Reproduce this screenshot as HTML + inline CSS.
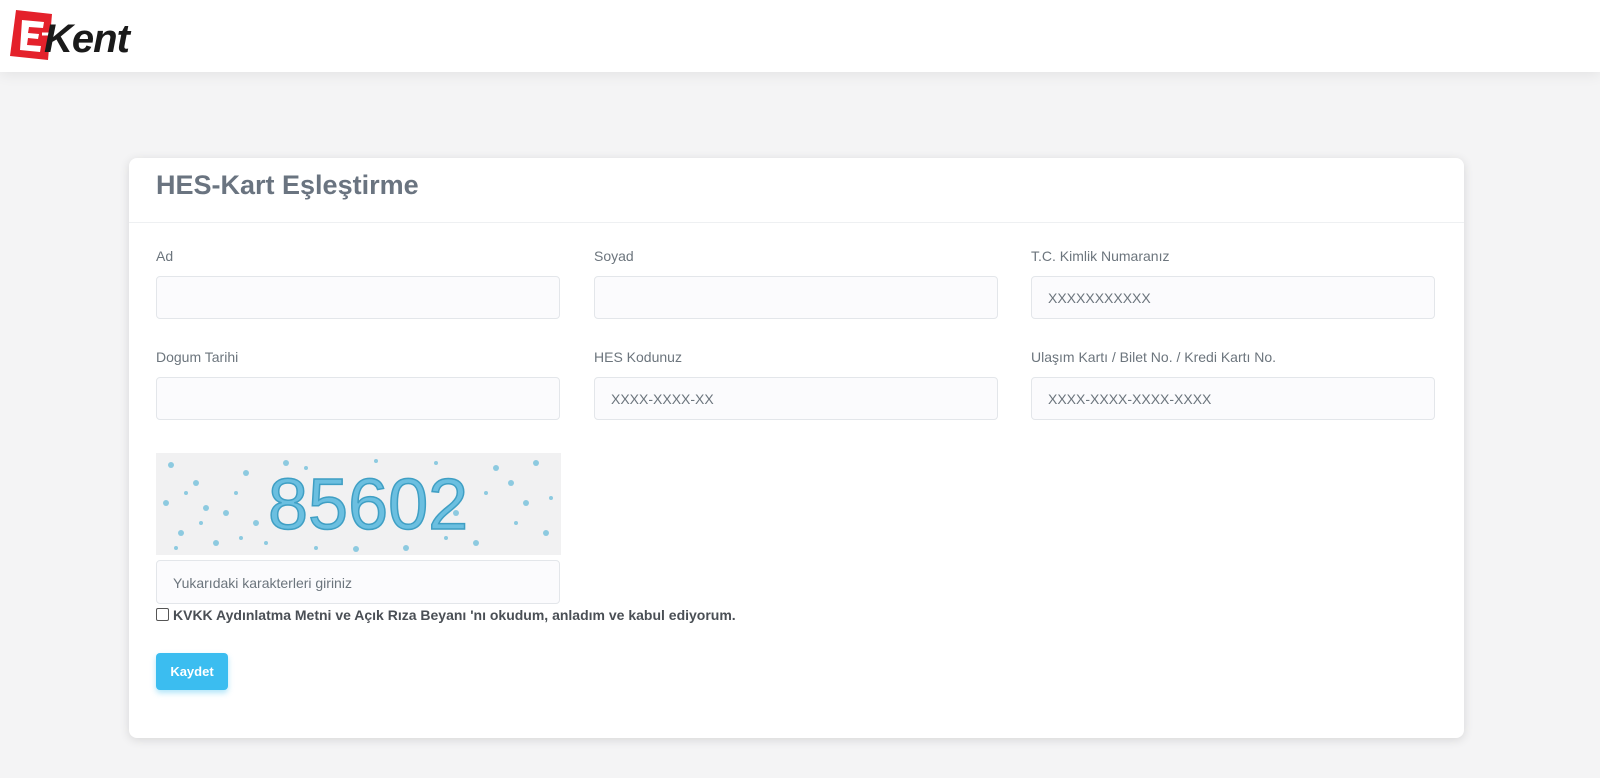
<!DOCTYPE html><html><head><meta charset="utf-8"><style>
body{margin:0;width:1600px;height:778px;background:#f4f4f5;font-family:"Liberation Sans",sans-serif;overflow:hidden;position:relative}
.hdr{position:absolute;left:0;top:0;width:1600px;height:72px;background:#fff;box-shadow:0 2px 14px rgba(0,0,0,.08)}
.card{position:absolute;left:129px;top:158px;width:1335px;height:580px;background:#fff;border-radius:8px;box-shadow:0 2px 10px rgba(0,0,0,.12)}
.t{position:absolute;left:156px;top:170px;font-size:27px;font-weight:bold;color:#6a7480}
.div{position:absolute;left:129px;top:222px;width:1335px;height:1px;background:#eef0f2}
.l{position:absolute;font-size:14px;color:#6c757d}
.i{position:absolute;width:404px;height:43px;border:1px solid #e3e6ea;border-radius:4px;background:#fbfbfd;box-sizing:border-box;font-size:14px;color:#6c757d;padding:13px 16px;}
</style></head><body>
<div class="hdr">
<svg width="150" height="64" style="position:absolute;left:8px;top:4px">
<polygon points="8,6 44,10 40,56 2,52" fill="#e4212b"/>
<path d="M14,16 L36,18 L35,24 L21,23 L20,29 L31,30 L30,35 L20,34 L19,41 L33,42 L32,48 L12,46 Z" fill="#fff"/>
<path d="M34,30 L42,30" stroke="#fff" stroke-width="3"/>
<text x="36" y="48" font-family="Liberation Sans" font-weight="bold" font-style="italic" font-size="40" fill="#1a1a1a" letter-spacing="-1">Kent</text>
</svg></div>
<div class="card"></div>
<div class="t">HES-Kart Eşleştirme</div>
<div class="div"></div>
<div class="l" style="left:156px;top:248px">Ad</div>
<div class="l" style="left:594px;top:248px">Soyad</div>
<div class="l" style="left:1031px;top:248px">T.C. Kimlik Numaranız</div>
<div class="i" style="left:156px;top:276px"></div>
<div class="i" style="left:594px;top:276px"></div>
<div class="i" style="left:1031px;top:276px">XXXXXXXXXXX</div>
<div class="l" style="left:156px;top:349px">Dogum Tarihi</div>
<div class="l" style="left:594px;top:349px">HES Kodunuz</div>
<div class="l" style="left:1031px;top:349px">Ulaşım Kartı / Bilet No. / Kredi Kartı No.</div>
<div class="i" style="left:156px;top:377px"></div>
<div class="i" style="left:594px;top:377px">XXXX-XXXX-XX</div>
<div class="i" style="left:1031px;top:377px">XXXX-XXXX-XXXX-XXXX</div>
<svg width="405" height="102" style="position:absolute;left:156px;top:453px;background:#f1f1f2">
<g fill="#7cc4de" opacity=".85">
<circle cx="15" cy="12" r="3"/><circle cx="40" cy="30" r="3"/><circle cx="70" cy="60" r="3"/><circle cx="25" cy="80" r="3"/><circle cx="90" cy="20" r="3"/><circle cx="60" cy="90" r="3"/><circle cx="340" cy="15" r="3"/><circle cx="370" cy="50" r="3"/><circle cx="390" cy="80" r="3"/><circle cx="320" cy="90" r="3"/><circle cx="355" cy="30" r="3"/><circle cx="100" cy="70" r="3"/><circle cx="130" cy="10" r="3"/><circle cx="250" cy="95" r="3"/><circle cx="200" cy="96" r="3"/><circle cx="10" cy="50" r="3"/><circle cx="50" cy="55" r="3"/><circle cx="380" cy="10" r="3"/><circle cx="300" cy="60" r="3"/>
<circle cx="30" cy="40" r="2"/><circle cx="80" cy="40" r="2"/><circle cx="110" cy="90" r="2"/><circle cx="150" cy="15" r="2"/><circle cx="220" cy="8" r="2"/><circle cx="280" cy="10" r="2"/><circle cx="330" cy="40" r="2"/><circle cx="395" cy="45" r="2"/><circle cx="360" cy="70" r="2"/><circle cx="20" cy="95" r="2"/><circle cx="85" cy="85" r="2"/><circle cx="160" cy="95" r="2"/><circle cx="290" cy="85" r="2"/><circle cx="45" cy="70" r="2"/><circle cx="120" cy="40" r="2"/>
</g>
<text x="112" y="76" font-family="Liberation Sans" font-size="72" fill="#6bbfe0" stroke="#3f9fc4" stroke-width="1.5" letter-spacing="0">85602</text>
</svg>
<div class="i" style="left:156px;top:560px;height:44px;padding:14px 16px">Yukarıdaki karakterleri giriniz</div>
<div style="position:absolute;left:156px;top:608px;width:11px;height:11px;border:1px solid #555;border-radius:2px;background:#fff"></div>
<div style="position:absolute;left:173px;top:607px;font-size:14px;font-weight:bold;color:#4a4f55">KVKK Aydınlatma Metni ve Açık Rıza Beyanı 'nı okudum, anladım ve kabul ediyorum.</div>
<div style="position:absolute;left:156px;top:653px;width:72px;height:37px;background:#3bbdf0;border-radius:4px;box-shadow:0 3px 6px rgba(59,189,240,.4);color:#fff;font-size:13px;font-weight:bold;text-align:center;line-height:37px">Kaydet</div>
</body></html>
